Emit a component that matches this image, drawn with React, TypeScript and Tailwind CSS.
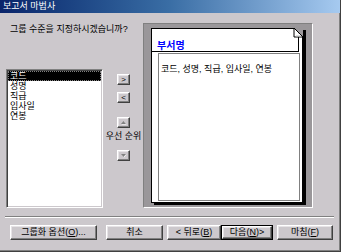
import React from "react";

const FIELDS = ["코드", "성명", "직급", "입사일", "연봉"];

const FONT = "font-['Liberation_Sans','Noto_Sans_CJK_KR',sans-serif]";

// raised Win classic bevel
const RAISED =
  "border border-t-white border-l-white border-r-[#404040] border-b-[#404040] shadow-[inset_-1px_-1px_0_#808080,inset_1px_1px_0_#e6e3e6]";

function SmallBtn({ children }: { children: React.ReactNode }) {
  return (
    <div className={`w-[13px] h-[11px] bg-[#ccc8cc] flex items-center justify-center ${RAISED}`}>
      {children}
    </div>
  );
}

function Arrow({ up }: { up?: boolean }) {
  return (
    <svg width="7" height="5" viewBox="0 0 7 5">
      {up ? (
        <>
          <polygon points="1.5,4.5 6.5,4.5 4,1.5" fill="#ffffff" />
          <polygon points="1,4 6,4 3.5,1" fill="#808080" />
        </>
      ) : (
        <>
          <polygon points="1.5,1.5 6.5,1.5 4,4.5" fill="#ffffff" />
          <polygon points="1,1 6,1 3.5,4" fill="#808080" />
        </>
      )}
    </svg>
  );
}

function DlgBtn({
  w,
  children,
  def,
  className = "",
}: {
  w: string;
  children: React.ReactNode;
  def?: boolean;
  className?: string;
}) {
  const face = (
    <div className={`h-full w-full bg-[#ccc8cc] flex items-center justify-center text-[9px] leading-none text-black ${RAISED}`}>
      {children}
    </div>
  );
  return (
    <div className={`${w} h-[15px] ${def ? "border border-black" : ""} ${className}`}>{face}</div>
  );
}

export default function App() {
  return (
    <div
      className={`w-[341px] h-[252px] bg-[#ccc8cc] flex flex-col border-r border-b border-r-[#404040] border-b-[#404040] shadow-[inset_-1px_-1px_0_#808080] ${FONT}`}
    >
      {/* Title bar */}
      <div className="h-[13px] shrink-0 flex items-center pl-[3px] bg-gradient-to-r from-[#0a246a] via-[#3a6ea5] to-[#a6caf0]">
        <span className="text-white text-[9px] leading-none">보고서 마법사</span>
      </div>

      {/* Main */}
      <div className="flex pt-[10px] h-[195px] shrink-0">
        <div className="w-[143px] pl-[6px] flex flex-col">
          <p className="pl-[4px] mt-[1px] text-[9px] leading-[11px] text-black">그룹 수준을 지정하시겠습니까?</p>
          <div className="flex mt-[34px]">
            {/* Field list */}
            <div className="w-[97px] h-[139px] border border-t-[#808080] border-l-[#808080] border-r-white border-b-white">
              <div className="w-full h-full bg-white shadow-[inset_1px_1px_0_#404040,inset_-1px_-1px_0_#ccc8cc] pt-[1px] pl-[1px]">
                {FIELDS.map((f, i) => (
                  <div
                    key={f}
                    className={`h-[10px] pl-[2px] mr-[1px] text-[9px] leading-[10px] ${
                      i === 0 ? "bg-black text-white outline outline-1 outline-dotted outline-[#808080] -outline-offset-1" : "text-black"
                    }`}
                  >
                    {f}
                  </div>
                ))}
              </div>
            </div>

            {/* Move / order buttons */}
            <div className="w-[40px] flex flex-col items-center pl-[1px]">
              <div className="mt-[5px]">
                <SmallBtn>
                  <span className="text-[8px] leading-none text-black">&gt;</span>
                </SmallBtn>
              </div>
              <div className="mt-[7px]">
                <SmallBtn>
                  <span className="text-[8px] leading-none text-black">&lt;</span>
                </SmallBtn>
              </div>
              <div className="mt-[14px]">
                <SmallBtn>
                  <Arrow up />
                </SmallBtn>
              </div>
              <span className="mt-[3px] text-[9px] leading-[10px] text-black whitespace-nowrap">우선 순위</span>
              <div className="mt-[9px]">
                <SmallBtn>
                  <Arrow />
                </SmallBtn>
              </div>
            </div>
          </div>
        </div>

        {/* Preview frame */}
        <div className="w-[170px] h-[185px] border border-t-[#808080] border-l-[#808080] border-r-white border-b-white bg-[#9a979a] pt-[4px] pl-[7px]">
          <div className="relative w-[152px] h-[175px] bg-white border border-black shadow-[3px_2px_0_#000] flex flex-col">
            {/* group header */}
            <div className="w-[147px] h-[23px] border-b border-r border-black pl-[5px] pt-[3px]">
              <span className="text-[10px] leading-none font-bold text-[#0000ff]">부서명</span>
            </div>
            {/* detail section */}
            <div className="ml-[6px] mt-[1px] w-[142px] flex-1 mb-[1px] border border-[#808080] pl-[2px] pt-[1px]">
              <span className="text-[9px] leading-[10px] text-black">코드, 성명, 직급, 입사일, 연봉</span>
            </div>
            {/* folded corner */}
            <svg className="absolute -top-px -right-px" width="10" height="10" viewBox="0 0 10 10">
              <polygon points="1,0 10,0 10,9" fill="#9a979a" />
              <polygon points="1,0.5 9.5,9 1,9" fill="#ffffff" />
              <polyline points="1,0 1,9 10,9" fill="none" stroke="#000" strokeWidth="1" />
              <line x1="1" y1="0" x2="10" y2="9" stroke="#000" strokeWidth="1" />
              <line x1="3" y1="8" x2="8" y2="8" stroke="#bdbdbd" strokeWidth="1" />
            </svg>
          </div>
        </div>
      </div>

      {/* Separator */}
      <div className="mt-[8px] ml-[5px] w-[329px] h-[2px] border-t border-b border-t-[#808080] border-b-white shrink-0" />

      {/* Bottom buttons */}
      <div className="flex mt-[7px] pl-[10px]">
        <DlgBtn w="w-[87px]">
          그룹화 옵션(<u>O</u>)...
        </DlgBtn>
        <DlgBtn w="w-[57px]" className="ml-[9px]">
          취소
        </DlgBtn>
        <DlgBtn w="w-[54px]" className="ml-[4px]">
          &lt; 뒤로(<u>B</u>)
        </DlgBtn>
        <DlgBtn w="w-[52px]" def>
          다음(<u>N</u>)&gt;
        </DlgBtn>
        <DlgBtn w="w-[56px]" className="ml-[4px]">
          마침(<u>F</u>)
        </DlgBtn>
      </div>
    </div>
  );
}
